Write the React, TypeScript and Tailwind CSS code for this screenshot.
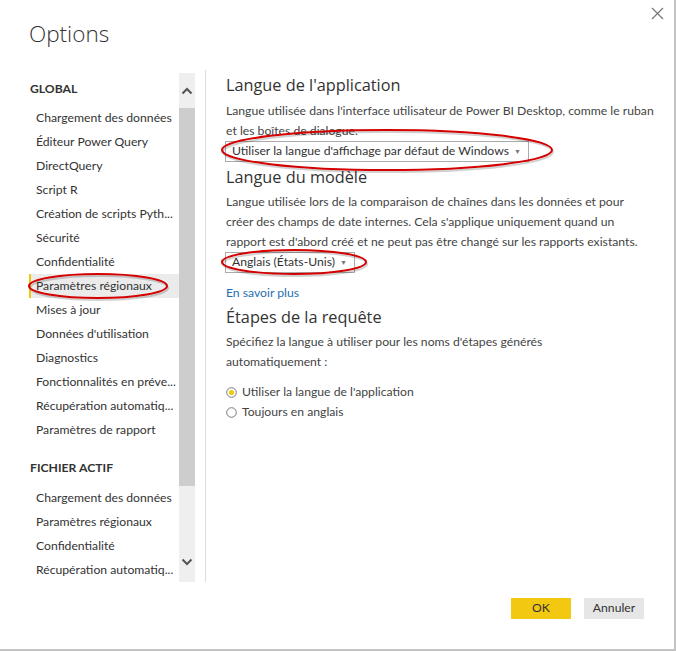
import React from "react";

const globalItems = [
  "Chargement des données",
  "Éditeur Power Query",
  "DirectQuery",
  "Script R",
  "Création de scripts Pyth...",
  "Sécurité",
  "Confidentialité",
  "Paramètres régionaux",
  "Mises à jour",
  "Données d'utilisation",
  "Diagnostics",
  "Fonctionnalités en préve...",
  "Récupération automatiq...",
  "Paramètres de rapport",
];

const fileItems = [
  "Chargement des données",
  "Paramètres régionaux",
  "Confidentialité",
  "Récupération automatiq...",
];

function NavItem({ label, selected }: { label: string; selected?: boolean }) {
  return (
    <div
      className={
        selected
          ? "h-6 flex items-center pl-[5px] border-l-2 border-[#f2c811] bg-[#ebebeb] whitespace-nowrap overflow-hidden"
          : "h-6 flex items-center pl-[7px] whitespace-nowrap overflow-hidden"
      }
    >
      {label}
    </div>
  );
}

function Dropdown({ label, width }: { label: string; width: string }) {
  return (
    <div
      className={`${width} h-[21px] border border-[#ababab] flex items-center justify-between pl-[6px] pr-[7px] text-[#333] bg-white`}
    >
      <span className="whitespace-nowrap">{label}</span>
      <span className="text-[7px] text-[#777]">▼</span>
    </div>
  );
}

export default function App() {
  return (
    <div
      className="relative w-[676px] h-[651px] bg-white border-r-2 border-b-2 border-[#c4c4c4] overflow-hidden text-[#333]"
      style={{ fontFamily: 'Lato, "Open Sans", sans-serif' }}
    >
      {/* close */}
      <div className="absolute left-[651px] top-[7px]">
        <svg width="13" height="13" viewBox="0 0 13 13">
          <path d="M1 1 L12 12 M12 1 L1 12" stroke="#777" strokeWidth="1.2" />
        </svg>
      </div>

      <div className="pl-[29px] pt-[17px] h-[73px]">
        <div
          className="text-[22.5px] font-light leading-[34px] text-[#333]"
          style={{ fontFamily: '"Open Sans", sans-serif' }}
        >
          Options
        </div>
      </div>

      <div className="flex h-[509px] pl-[29px]">
        {/* nav */}
        <div className="w-[150px] text-[12.2px] text-[#333] pt-[4px]">
          <div className="h-6 flex items-center pl-[1px] font-bold text-[12.2px] text-[#333]">GLOBAL</div>
          <div className="mt-[5px]">
            {globalItems.map((it) => (
              <NavItem key={it} label={it} selected={it === "Paramètres régionaux"} />
            ))}
          </div>
          <div className="h-6 flex items-center pl-[1px] font-bold mt-[14px]">FICHIER ACTIF</div>
          <div className="mt-[6px]">
            {fileItems.map((it) => (
              <NavItem key={it + "f"} label={it} />
            ))}
          </div>
        </div>
        {/* scrollbar */}
        <div className="w-[16px] bg-[#efefef] flex flex-col">
          <div className="h-[35px] flex items-center justify-center">
            <svg width="12" height="8" viewBox="0 0 12 8">
              <path d="M1.5 6.5 L6 2 L10.5 6.5" stroke="#555" strokeWidth="2" fill="none" />
            </svg>
          </div>
          <div className="h-[378px] bg-[#cdcdcd]" />
          <div className="flex-1 flex items-end justify-center pb-[16px]">
            <svg width="12" height="8" viewBox="0 0 12 8">
              <path d="M1.5 1.5 L6 6 L10.5 1.5" stroke="#555" strokeWidth="2" fill="none" />
            </svg>
          </div>
        </div>
        <div className="w-[10px]" />
        <div className="w-px bg-[#dcdcdc] -mt-[3px]" />
        {/* content */}
        <div className="pl-[20px] text-[12.2px] text-[#444]">
          <div
            className="text-[16.3px] leading-6 text-[#333]"
            style={{ fontFamily: '"Open Sans", sans-serif' }}
          >
            Langue de l'application
          </div>
          <div className="mt-[4px] leading-5">
            Langue utilisée dans l'interface utilisateur de Power BI Desktop, comme le ruban
            <br />
            et les boîtes de dialogue.
          </div>
          <div className="-ml-px">
            <Dropdown label="Utiliser la langue d'affichage par défaut de Windows" width="w-[304px]" />
          </div>
          <div
            className="text-[16.3px] leading-6 text-[#333] mt-[3px]"
            style={{ fontFamily: '"Open Sans", sans-serif' }}
          >
            Langue du modèle
          </div>
          <div className="mt-[3px] leading-5">
            Langue utilisée lors de la comparaison de chaînes dans les données et pour
            <br />
            créer des champs de date internes. Cela s'applique uniquement quand un
            <br />
            rapport est d'abord créé et ne peut pas être changé sur les rapports existants.
          </div>
          <div className="-ml-px">
            <Dropdown label="Anglais (États-Unis)" width="w-[130px]" />
          </div>
          <div className="text-[#1f6fb2] mt-[10px] leading-5">En savoir plus</div>
          <div
            className="text-[16.3px] leading-6 text-[#333] mt-[2px]"
            style={{ fontFamily: '"Open Sans", sans-serif' }}
          >
            Étapes de la requête
          </div>
          <div className="mt-[3px] leading-5">
            Spécifiez la langue à utiliser pour les noms d'étapes générés
            <br />
            automatiquement :
          </div>
          <div className="mt-[10px] flex items-center h-5">
            <svg width="11" height="11" viewBox="0 0 11 11" className="mr-[5px]">
              <circle cx="5.5" cy="5.5" r="4.8" fill="white" stroke="#777" strokeWidth="1" />
              <circle cx="5.5" cy="5.5" r="2.6" fill="#f2c811" />
            </svg>
            <span>Utiliser la langue de l'application</span>
          </div>
          <div className="flex items-center h-5">
            <svg width="11" height="11" viewBox="0 0 11 11" className="mr-[5px]">
              <circle cx="5.5" cy="5.5" r="4.8" fill="white" stroke="#777" strokeWidth="1" />
            </svg>
            <span>Toujours en anglais</span>
          </div>
        </div>
      </div>

      {/* buttons */}
      <div className="flex justify-end gap-[13px] pr-[30px] mt-[16px] text-[12.2px]">
        <div className="w-[60px] h-[21px] bg-[#f2c811] flex items-center justify-center text-[#333]">OK</div>
        <div className="w-[60px] h-[21px] bg-[#e6e6e6] flex items-center justify-center text-[#333]">Annuler</div>
      </div>

      {/* red annotation ellipses */}
      <svg className="absolute left-0 top-0 pointer-events-none" width="676" height="651">
        <g fill="none" strokeWidth="2">
          <ellipse cx="388" cy="152" rx="165" ry="20" stroke="rgba(0,0,0,0.18)" />
          <ellipse cx="387" cy="150" rx="165" ry="20" stroke="#d40000" />
          <ellipse cx="295" cy="264" rx="72" ry="12" stroke="rgba(0,0,0,0.18)" />
          <ellipse cx="294" cy="262" rx="72" ry="12" stroke="#d40000" />
          <ellipse cx="99" cy="288" rx="69" ry="12" stroke="rgba(0,0,0,0.18)" />
          <ellipse cx="98" cy="286" rx="69" ry="12" stroke="#d40000" />
        </g>
      </svg>
    </div>
  );
}
